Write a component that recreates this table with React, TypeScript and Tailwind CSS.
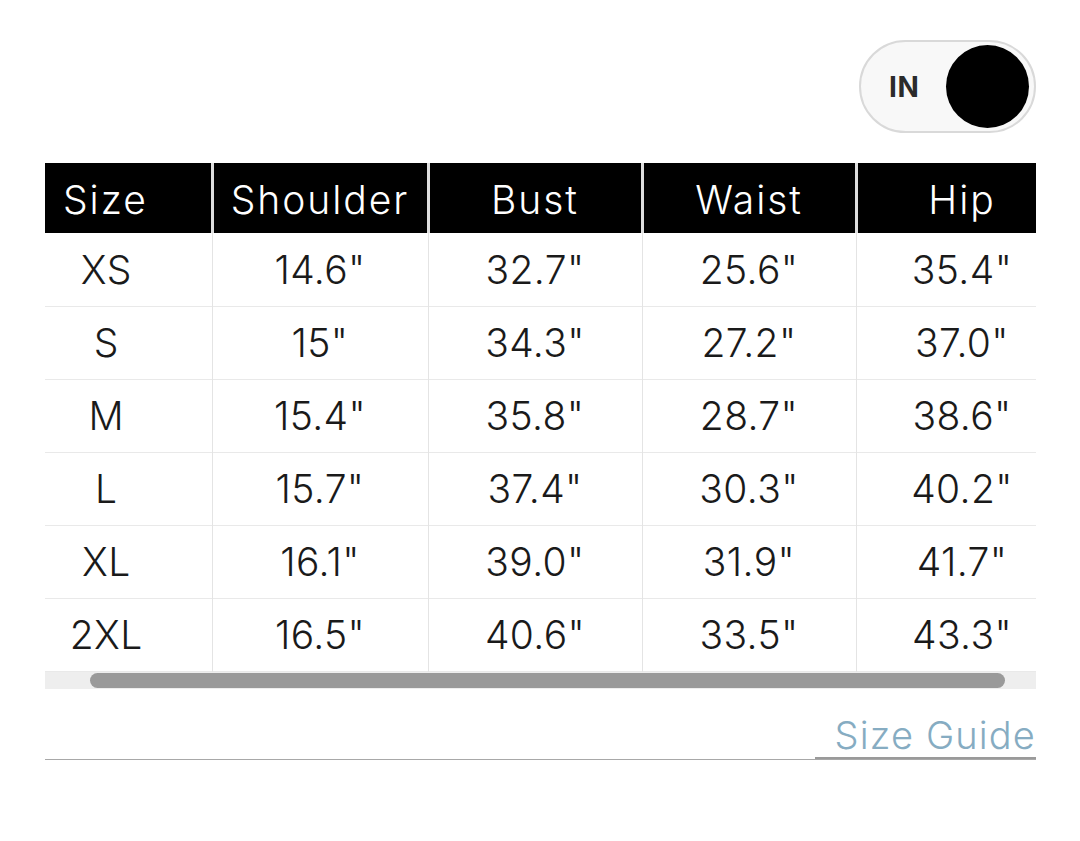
import React from 'react';

const rows = [
  ['XS', '14.6"', '32.7"', '25.6"', '35.4"'],
  ['S', '15"', '34.3"', '27.2"', '37.0"'],
  ['M', '15.4"', '35.8"', '28.7"', '38.6"'],
  ['L', '15.7"', '37.4"', '30.3"', '40.2"'],
  ['XL', '16.1"', '39.0"', '31.9"', '41.7"'],
  ['2XL', '16.5"', '40.6"', '33.5"', '43.3"'],
];

const headers = ['Size', 'Shoulder', 'Bust', 'Waist', 'Hip'];
const widths = ['w-[167px]', 'w-[216px]', 'w-[214px]', 'w-[214px]', 'w-[212px]'];

const App = () => {
  return (
    <div className="w-[1080px] h-[841px] bg-white" style={{ fontFamily: 'Inter, "Noto Sans", sans-serif' }}>
      <div className="pl-[45px] pr-[44px] pt-[40px]">
        <div className="flex justify-end">
          <div className="flex items-center h-[93px] w-[177px] rounded-full border-2 border-[#d9d9d9] bg-[#f8f8f8] pl-[28px] pr-[5px]">
            <span className="text-[28px] font-bold text-[#2b2b2b] tracking-wide">IN</span>
            <div className="ml-auto w-[83px] h-[83px] rounded-full bg-black" />
          </div>
        </div>

        <div className="mt-[30px] overflow-hidden">
          <table className="table-fixed border-collapse w-[1023px]">
            <thead>
              <tr>
                {headers.map((h, i) => (
                  <th
                    key={h}
                    className={`${widths[i]} h-[70px] pt-[4px] bg-black text-white font-light text-[39px] tracking-[0.05em] border-r-[3px] border-[#dedede] ${i === 0 ? 'text-left pl-[18px]' : 'text-center'}`}
                  >
                    {h}
                  </th>
                ))}
              </tr>
            </thead>
            <tbody>
              {rows.map((r) => (
                <tr key={r[0]} className="h-[73px] border-b border-[#e9e9e9]">
                  {r.map((c, i) => (
                    <td
                      key={i}
                      className={`border-r border-[#e4e4e4] pt-[2px] text-[39px] tracking-[0.01em] font-light text-[#1a1a1a] ${i === 0 ? 'text-center pr-[44px]' : 'text-center'}`}
                    >
                      {c}
                    </td>
                  ))}
                </tr>
              ))}
            </tbody>
          </table>
          <div className="h-[17px] bg-[#eeeeee] flex items-center">
            <div className="ml-[45px] w-[915px] h-[15px] rounded-full bg-[#9a9a9a]" />
          </div>
        </div>

        <div className="mt-[24px] border-b border-[#a8a8a8] flex justify-end">
          <a className="text-[38px] font-light text-[#86acc2] tracking-[0.03em] border-b-2 border-[#9a9a9a] pl-[20px] leading-[44px]">
            Size Guide
          </a>
        </div>
      </div>
    </div>
  );
};

export default App;
